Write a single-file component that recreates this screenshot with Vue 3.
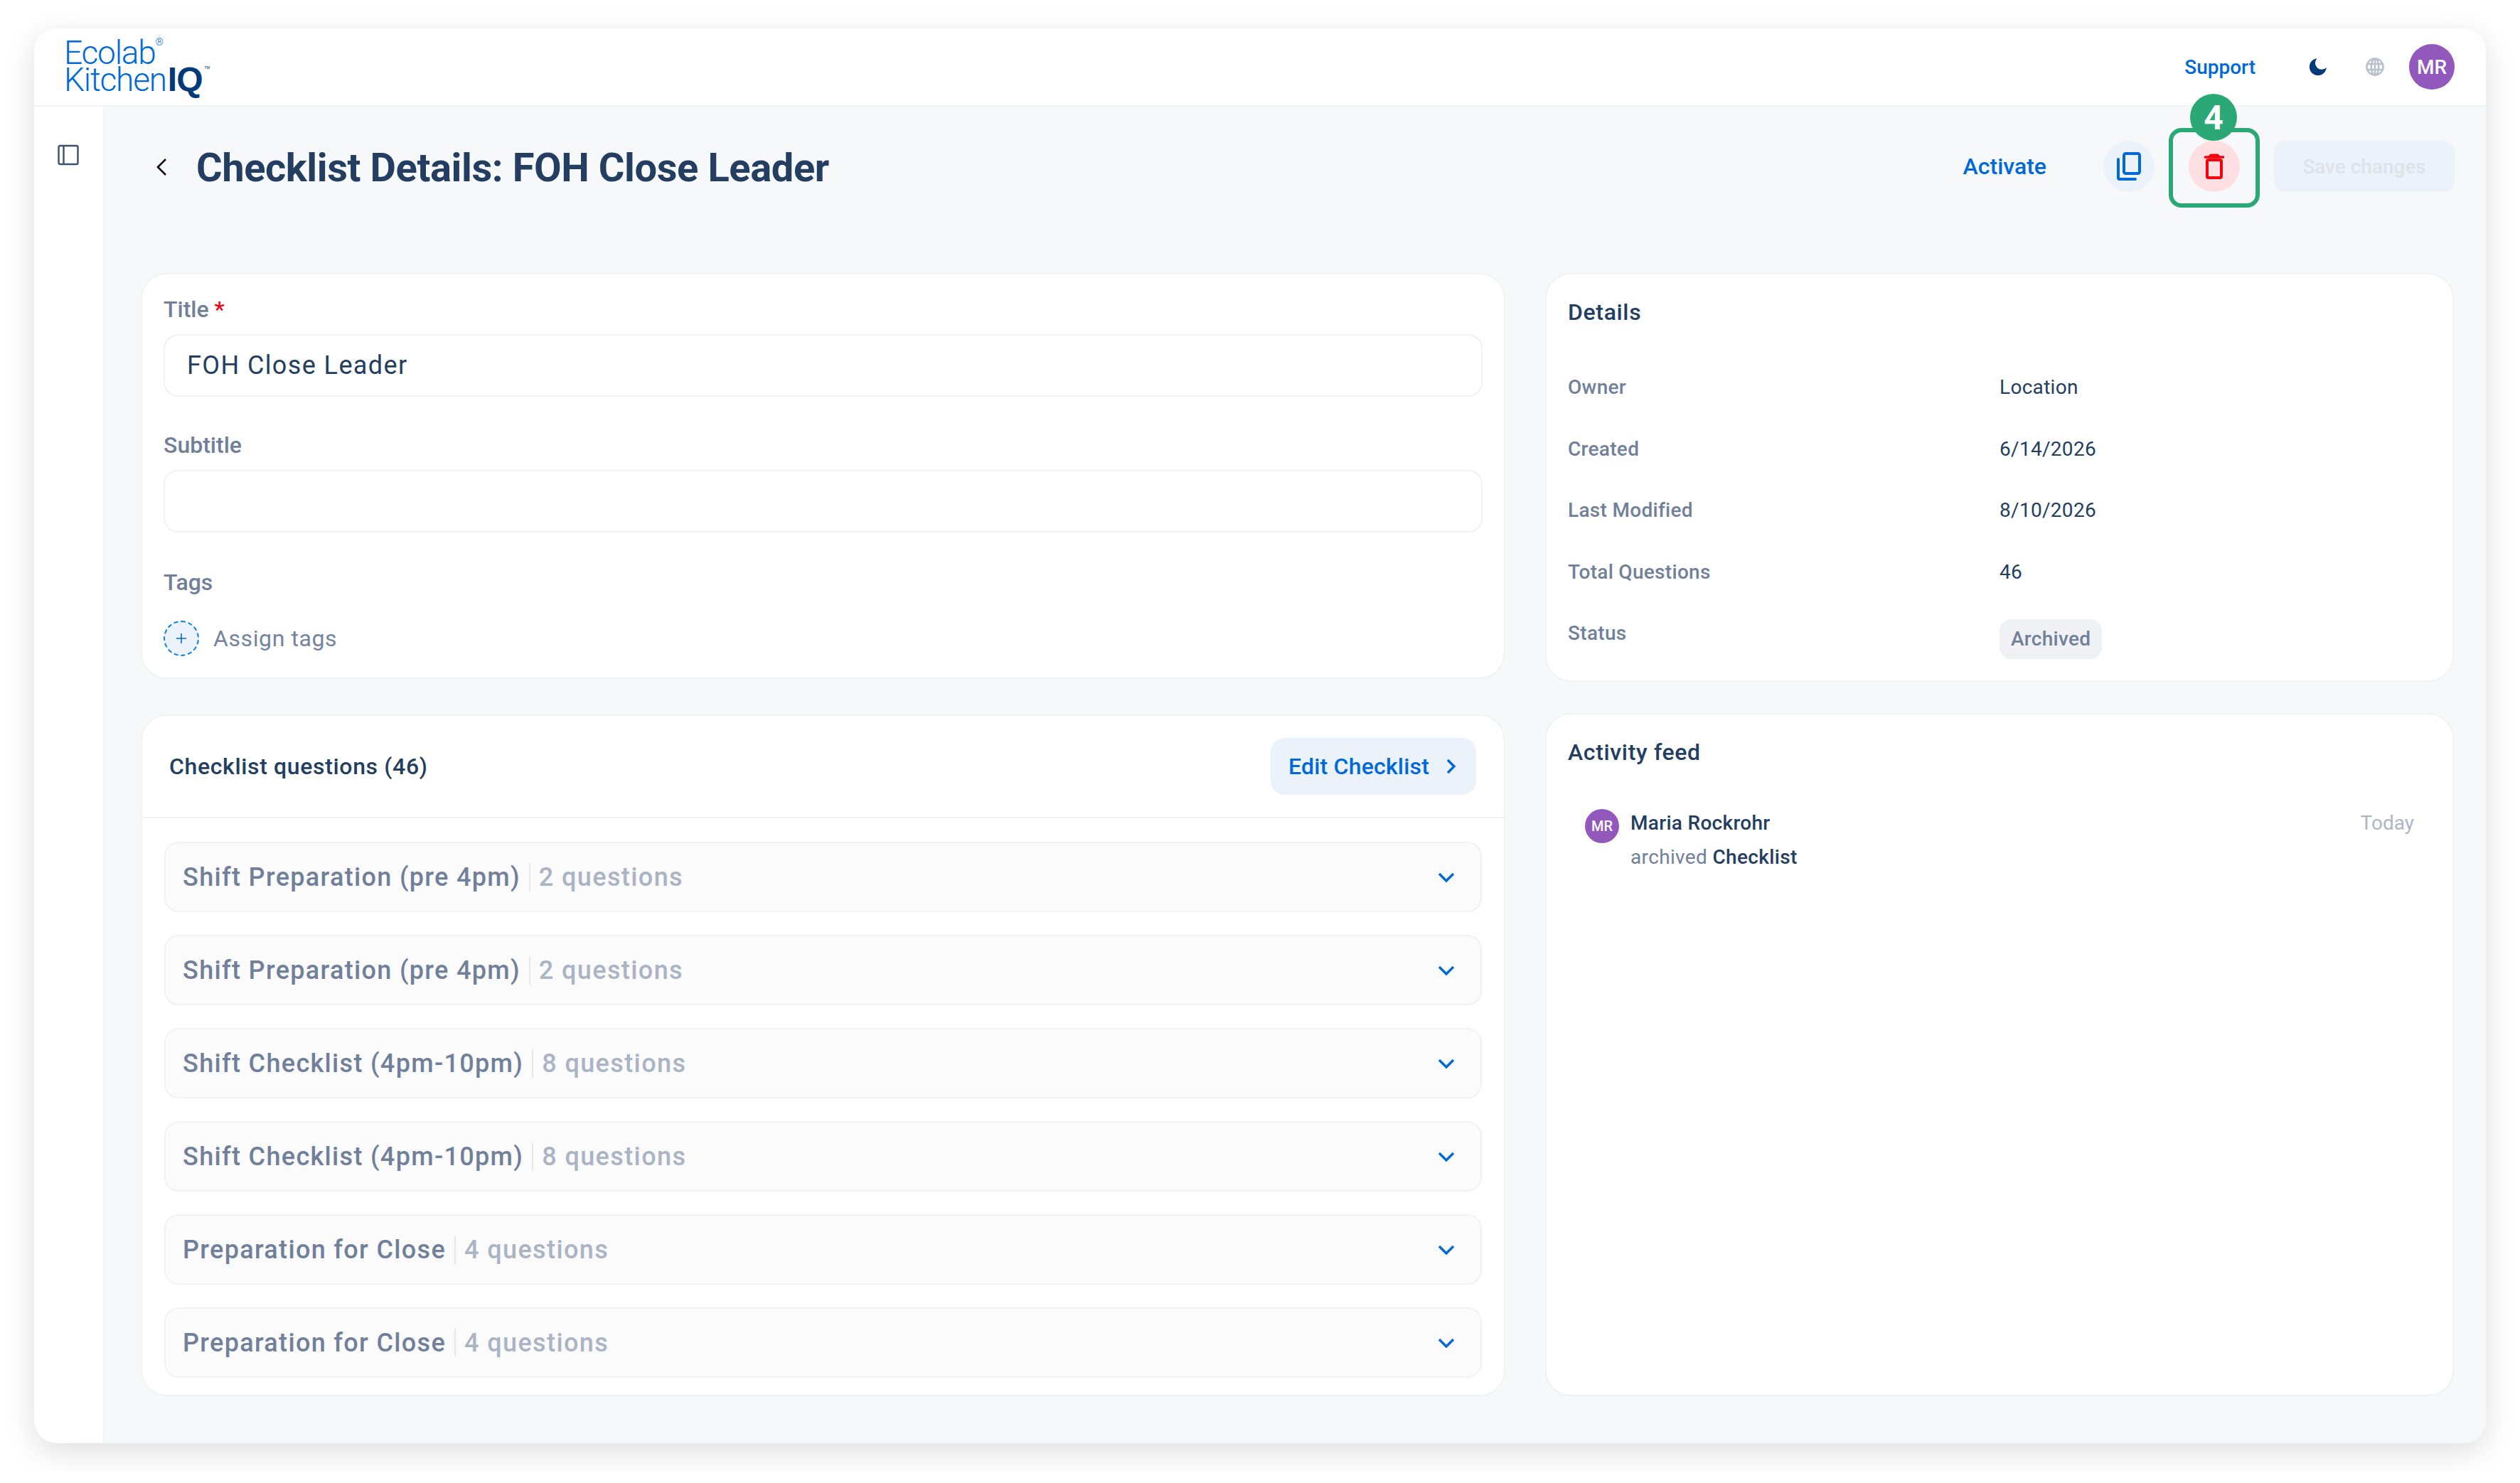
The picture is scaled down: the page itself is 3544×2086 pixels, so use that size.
<template>
  <div class="window">
    <header class="topbar">
      <div class="logo">
        <div class="logo-line">Ecolab<sup class="reg">®</sup></div>
        <div class="logo-line">Kitchen<b class="iq">IQ</b><sup class="tm">™</sup></div>
      </div>
      <div class="top-actions">
        <a class="support">Support</a>
        <svg class="moon" viewBox="0 0 24 24"><path fill="#003a78" d="M10.5.2A12 12 0 1 0 23.8 13 8 8 0 0 1 10.5.2z"/></svg>
        <svg class="globe" viewBox="0 0 26 26" fill="none" stroke="#b9c1cc" stroke-width="2.5">
          <circle cx="13" cy="13" r="11.6"/>
          <ellipse cx="13" cy="13" rx="5.2" ry="11.6"/>
          <path d="M2.4 9h21.2M2.4 17h21.2M13 1.5v23"/>
        </svg>
        <div class="avatar">MR</div>
      </div>
    </header>

    <div class="body">
      <aside class="sidebar">
        <svg class="panel-icon" viewBox="0 0 30 30" fill="none" stroke="#3a506e" stroke-width="2.4">
          <rect x="1.5" y="2" width="27" height="26" rx="2"/>
          <path d="M8.5 2v26"/>
        </svg>
      </aside>

      <main class="content">
        <div class="page-head">
          <svg class="back" viewBox="0 0 16 26" fill="none" stroke="#0b0f14" stroke-width="2.6"><path d="M14 2 3 13l11 11"/></svg>
          <h1 class="page-title">Checklist Details: FOH Close Leader</h1>
          <div class="head-actions">
            <a class="activate">Activate</a>
            <button class="round-btn copy">
              <svg viewBox="0 0 34 40" fill="none" stroke="#0069d9" stroke-width="4" stroke-linecap="round">
                <rect x="10" y="2" width="22" height="28" rx="2.5"/>
                <path d="M2 10v26a2 2 0 0 0 2 2h22"/>
              </svg>
            </button>
            <div class="highlight">
              <span class="step">4</span>
              <button class="round-btn trash">
                <svg viewBox="0 0 28 36">
                  <rect x="4" y="9" width="20" height="25" rx="2" fill="none" stroke="#f5000f" stroke-width="4"/>
                  <path d="M1.5 5h25" fill="none" stroke="#f5000f" stroke-width="3.6" stroke-linecap="round"/>
                  <path d="M6 4Q7 .5 10 .5h8Q21 .5 22 4z" fill="#f5000f"/>
                </svg>
              </button>
            </div>
            <button class="save">Save changes</button>
          </div>
        </div>

        <div class="grid">
          <div class="col">
            <section class="card form-card">
              <label class="field-label">Title <span class="req">*</span></label>
              <div class="input">FOH Close Leader</div>
              <label class="field-label sub-label">Subtitle</label>
              <div class="input"></div>
              <label class="field-label tags-label">Tags</label>
              <div class="assign">
                <span class="assign-icon">
                  <svg viewBox="0 0 16 16" fill="none" stroke="#0069d9" stroke-width="1.6"><path d="M8 1v14M1 8h14"/></svg>
                </span>
                <span>Assign tags</span>
              </div>
            </section>

            <section class="card questions-card">
              <div class="questions-head">
                <h2 class="card-title">Checklist questions (46)</h2>
                <button class="edit-btn">
                  Edit Checklist
                  <svg viewBox="0 0 14 22" fill="none" stroke="#0069d9" stroke-width="3.4"><path d="M2 2l9 9-9 9"/></svg>
                </button>
              </div>
              <div class="groups">
                <div v-for="(g, i) in groups" :key="i" class="group">
                  <span class="group-name">{{ g.name }}</span>
                  <span class="group-count">{{ g.count }} questions</span>
                  <svg class="group-chev" viewBox="0 0 24 14" fill="none" stroke="#0069d9" stroke-width="3.4"><path d="M2 2l10 10L22 2"/></svg>
                </div>
              </div>
            </section>
          </div>

          <div class="col">
            <section class="card details-card">
              <h2 class="card-title">Details</h2>
              <div class="detail-rows">
                <div v-for="row in details" :key="row.label" class="detail-row">
                  <span class="detail-label">{{ row.label }}</span>
                  <span class="detail-value">{{ row.value }}</span>
                </div>
                <div class="detail-row status-row">
                  <span class="detail-label">Status</span>
                  <span class="pill">Archived</span>
                </div>
              </div>
            </section>

            <section class="card feed-card">
              <h2 class="card-title">Activity feed</h2>
              <div class="feed-item">
                <div class="avatar small">MR</div>
                <div class="feed-text">
                  <div class="feed-name">Maria Rockrohr</div>
                  <div class="feed-action">archived <b>Checklist</b></div>
                </div>
                <span class="feed-time">Today</span>
              </div>
            </section>
          </div>
        </div>
      </main>
    </div>
  </div>
</template>

<script setup>
const groups = [
  { name: 'Shift Preparation (pre 4pm)', count: 2 },
  { name: 'Shift Preparation (pre 4pm)', count: 2 },
  { name: 'Shift Checklist (4pm-10pm)', count: 8 },
  { name: 'Shift Checklist (4pm-10pm)', count: 8 },
  { name: 'Preparation for Close', count: 4 },
  { name: 'Preparation for Close', count: 4 }
]

const details = [
  { label: 'Owner', value: 'Location' },
  { label: 'Created', value: '6/14/2026' },
  { label: 'Last Modified', value: '8/10/2026' },
  { label: 'Total Questions', value: '46' }
]
</script>

<style>
html, body {
  margin: 0;
  background: #fff;
}
</style>

<style scoped>
.window {
  box-sizing: border-box;
  width: 3448px;
  height: 1990px;
  margin: 40px 48px;
  border-radius: 32px;
  background: #fff;
  box-shadow: 0 12px 44px rgba(0, 0, 0, 0.13);
  overflow: hidden;
  display: flex;
  flex-direction: column;
  font-family: Roboto, "Liberation Sans", sans-serif;
  color: #233e60;
}

.topbar {
  box-sizing: border-box;
  height: 110px;
  flex: none;
  border-bottom: 2px solid #f1f2f4;
  display: flex;
  align-items: center;
  justify-content: space-between;
  padding: 0 44px 0 42px;
}

.logo {
  color: #0069d9;
  font-weight: 300;
  font-size: 46px;
  line-height: 38px;
  letter-spacing: -1.2px;
  margin-top: -2px;
}

.logo-line {
  white-space: nowrap;
}

.reg {
  font-size: 14px;
  line-height: 0;
  vertical-align: 26px;
  letter-spacing: 0;
}

.iq {
  font-family: "Liberation Sans", sans-serif;
  font-weight: 700;
  font-size: 48px;
  color: #003a78;
  letter-spacing: -1px;
  margin-left: 2px;
}

.tm {
  font-size: 15px;
  line-height: 0;
  vertical-align: 24px;
  color: #003a78;
  letter-spacing: 0;
  margin-left: 2px;
}

.top-actions {
  display: flex;
  align-items: center;
}

.support {
  color: #0069d9;
  font-size: 28px;
  font-weight: 500;
  margin-right: 76px;
}

.moon {
  width: 24px;
  height: 24px;
  margin-right: 55px;
}

.globe {
  width: 26px;
  height: 26px;
  margin-right: 35px;
}

.avatar {
  width: 64px;
  height: 64px;
  border-radius: 50%;
  background: #9358bb;
  color: #fff;
  font-size: 28px;
  font-weight: 500;
  display: flex;
  align-items: center;
  justify-content: center;
}

.avatar.small {
  width: 48px;
  height: 48px;
  font-size: 20px;
  flex: none;
}

.body {
  flex: 1;
  display: flex;
  min-height: 0;
}

.sidebar {
  box-sizing: border-box;
  width: 99px;
  flex: none;
  border-right: 2px solid #f1f2f4;
  padding: 53px 0 0 33px;
}

.panel-icon {
  display: block;
  width: 30px;
  height: 30px;
}

.content {
  flex: 1;
  background: #f6f8fa;
  box-sizing: border-box;
  padding: 0 44px 66px 51px;
  display: flex;
  flex-direction: column;
}

.page-head {
  height: 234px;
  flex: none;
  display: flex;
  align-items: flex-start;
  padding-top: 48px;
  box-sizing: border-box;
}

.back {
  width: 16px;
  height: 26px;
  margin: 24px 0 0 21px;
  flex: none;
}

.page-title {
  margin: 2px 0 0 41px;
  font-size: 56px;
  font-weight: 700;
  line-height: 72px;
  letter-spacing: -0.4px;
}

.head-actions {
  margin-left: auto;
  display: flex;
  align-items: center;
  height: 72px;
}

.activate {
  color: #0069d9;
  font-size: 32px;
  font-weight: 500;
  margin-right: 80px;
}

.round-btn {
  width: 72px;
  height: 72px;
  border: 0;
  border-radius: 50%;
  padding: 0;
  display: flex;
  align-items: center;
  justify-content: center;
}

.copy {
  background: #ebf2fa;
}

.copy svg {
  width: 34px;
  height: 40px;
}

.trash {
  background: #ffdfe2;
  margin-top: -4px;
}

.trash svg {
  width: 28px;
  height: 36px;
}

.highlight {
  position: relative;
  box-sizing: border-box;
  width: 128px;
  height: 112px;
  margin: 4px 20px 0;
  border: 6px solid #2aa876;
  border-radius: 18px;
  display: flex;
  align-items: center;
  justify-content: center;
}

.step {
  position: absolute;
  top: -54px;
  left: 24px;
  width: 66px;
  height: 66px;
  border-radius: 50%;
  background: #2aa876;
  color: #fff;
  font-size: 48px;
  font-weight: 700;
  display: flex;
  align-items: center;
  justify-content: center;
}

.save {
  width: 254px;
  height: 72px;
  border: 0;
  border-radius: 16px;
  background: #ebf2fa;
  color: #dfe3e8;
  font-family: inherit;
  font-size: 28px;
  font-weight: 500;
  padding: 0;
}

.grid {
  flex: 1;
  min-height: 0;
  display: grid;
  grid-template-columns: 1919px 1278px;
  gap: 56px;
}

.col {
  display: flex;
  flex-direction: column;
  min-height: 0;
}

.card {
  box-sizing: border-box;
  background: #fff;
  border: 2px solid #f1f2f4;
  border-radius: 36px;
}

.form-card {
  height: 571px;
  padding: 29px 30px 0;
  margin-bottom: 50px;
}

.field-label {
  display: block;
  font-size: 32px;
  font-weight: 500;
  line-height: 40px;
  color: #71809a;
}

.req {
  color: #f5000f;
}

.input {
  box-sizing: border-box;
  height: 88px;
  margin-top: 15px;
  border: 2px solid #f1f2f4;
  border-radius: 20px;
  padding: 0 30px 0 31px;
  font-size: 36px;
  line-height: 84px;
  letter-spacing: 1.4px;
}

.sub-label {
  margin-top: 48px;
}

.tags-label {
  margin-top: 50px;
}

.assign {
  display: flex;
  align-items: center;
  gap: 20px;
  margin-top: 34px;
  font-size: 32px;
  letter-spacing: 0.6px;
  color: #7484a0;
}

.assign-icon {
  box-sizing: border-box;
  width: 50px;
  height: 50px;
  border-radius: 50%;
  border: 2px dashed #0a7fe6;
  background: #ebf2fa;
  display: flex;
  align-items: center;
  justify-content: center;
}

.assign-icon svg {
  width: 16px;
  height: 16px;
}

.questions-card {
  flex: 1;
  min-height: 0;
}

.questions-head {
  box-sizing: border-box;
  height: 144px;
  border-bottom: 2px solid #f1f2f4;
  display: flex;
  align-items: center;
  justify-content: space-between;
  padding: 0 39px 0 38px;
}

.card-title {
  margin: 0;
  font-size: 32px;
  font-weight: 500;
  letter-spacing: 0.65px;
}

.edit-btn {
  box-sizing: border-box;
  width: 289px;
  height: 80px;
  border: 0;
  border-radius: 20px;
  background: #ebf2fa;
  color: #0069d9;
  font-family: inherit;
  font-size: 32px;
  font-weight: 500;
  letter-spacing: 0.2px;
  display: flex;
  align-items: center;
  justify-content: space-between;
  padding: 0 28px 0 25px;
}

.edit-btn svg {
  width: 14px;
  height: 22px;
}

.groups {
  padding: 33px 31px 0;
  display: flex;
  flex-direction: column;
  gap: 32px;
}

.group {
  box-sizing: border-box;
  height: 99px;
  background: #fbfbfc;
  border: 2px solid #f1f2f4;
  border-radius: 20px;
  display: flex;
  align-items: center;
  padding: 0 36px 0 24px;
  font-size: 36px;
  letter-spacing: 1.33px;
}

.group-name {
  font-weight: 500;
  color: #71809a;
  padding-right: 12px;
  border-right: 2px solid #e6e8ec;
  line-height: 40px;
}

.group-count {
  color: #abb4c4;
  padding-left: 12px;
  font-weight: 500;
  letter-spacing: 1.4px;
}

.group-chev {
  width: 24px;
  height: 14px;
  margin-left: auto;
}

.details-card {
  height: 575px;
  padding: 34px 30px 0;
  margin-bottom: 44px;
}

.detail-rows {
  margin-top: 69px;
  display: flex;
  flex-direction: column;
  gap: 50.5px;
}

.detail-row {
  display: flex;
  align-items: flex-start;
  font-size: 28px;
  line-height: 36px;
  letter-spacing: 0.3px;
}

.detail-label {
  width: 607px;
  color: #71809a;
  font-weight: 500;
}

.detail-value {
  letter-spacing: 0.3px;
}

.pill {
  box-sizing: border-box;
  height: 56px;
  margin-top: -2px;
  padding: 0 16px;
  border-radius: 16px;
  background: #f0f1f4;
  color: #71809a;
  font-size: 28px;
  font-weight: 500;
  line-height: 56px;
}

.feed-card {
  flex: 1;
  min-height: 0;
  padding: 34px 30px 0;
}

.feed-item {
  margin-top: 61px;
  padding: 0 24px;
  display: flex;
  align-items: flex-start;
}

.feed-text {
  margin-left: 16px;
}

.feed-name {
  font-size: 28px;
  font-weight: 500;
  line-height: 40px;
  letter-spacing: 0.3px;
}

.feed-action {
  font-size: 28px;
  line-height: 40px;
  margin-top: 8px;
  color: #71809a;
  letter-spacing: 0.35px;
}

.feed-action b {
  font-weight: 500;
  color: #233e60;
}

.feed-time {
  margin-left: auto;
  margin-top: 2px;
  font-size: 28px;
  color: #aeb6c6;
  line-height: 36px;
}
</style>
